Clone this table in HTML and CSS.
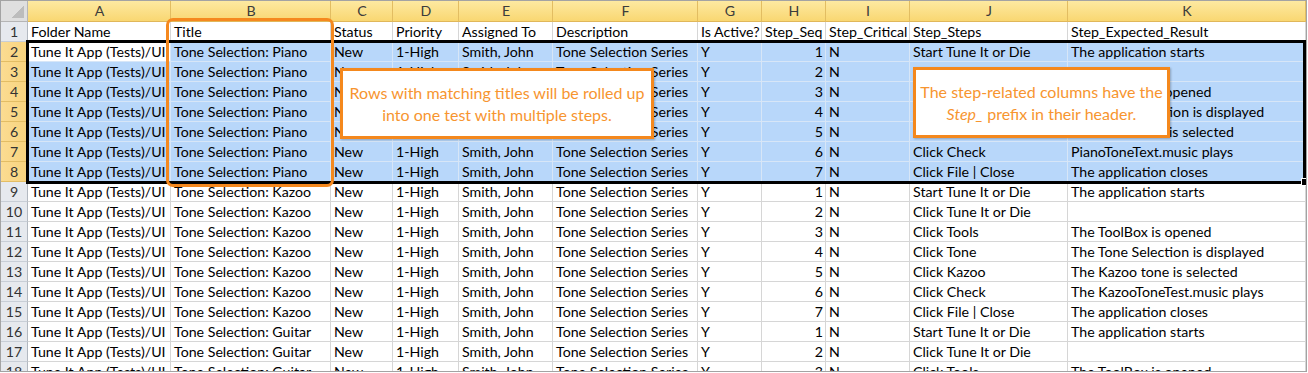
FILE: index.html
```html
<!DOCTYPE html>
<html>
<head>
<meta charset="utf-8">
<link rel="stylesheet" href="styles.css">
</head>
<body>
<div class="sheet">
  <table class="grid">
    <colgroup>
      <col class="w-rh"><col class="w-a"><col class="w-b"><col class="w-c"><col class="w-d"><col class="w-e"><col class="w-f"><col class="w-g"><col class="w-h"><col class="w-i"><col class="w-j"><col class="w-k">
    </colgroup>
    <thead>
      <tr class="colhdr">
        <th class="corner"><div class="corner-in"><span class="tri"></span></div></th>
        <th>A</th><th>B</th><th>C</th><th>D</th><th>E</th><th>F</th><th>G</th><th>H</th><th>I</th><th>J</th><th>K</th>
      </tr>
    </thead>
    <tbody>
      <tr><th class="rh">1</th><td>Folder Name</td><td>Title</td><td>Status</td><td>Priority</td><td>Assigned To</td><td>Description</td><td>Is Active?</td><td>Step_Seq</td><td>Step_Critical</td><td>Step_Steps</td><td>Step_Expected_Result</td></tr>
      <tr class="sel first"><th class="rh">2</th><td class="active">Tune It App (Tests)/UI</td><td>Tone Selection: Piano</td><td>New</td><td>1-High</td><td>Smith, John</td><td>Tone Selection Series</td><td>Y</td><td class="num">1</td><td>N</td><td>Start Tune It or Die</td><td>The application starts</td></tr>
      <tr class="sel"><th class="rh">3</th><td>Tune It App (Tests)/UI</td><td>Tone Selection: Piano</td><td>New</td><td>1-High</td><td>Smith, John</td><td>Tone Selection Series</td><td>Y</td><td class="num">2</td><td>N</td><td>Click Tune It or Die</td><td></td></tr>
      <tr class="sel"><th class="rh">4</th><td>Tune It App (Tests)/UI</td><td>Tone Selection: Piano</td><td>New</td><td>1-High</td><td>Smith, John</td><td>Tone Selection Series</td><td>Y</td><td class="num">3</td><td>N</td><td>Click Tools</td><td>The ToolBox is opened</td></tr>
      <tr class="sel"><th class="rh">5</th><td>Tune It App (Tests)/UI</td><td>Tone Selection: Piano</td><td>New</td><td>1-High</td><td>Smith, John</td><td>Tone Selection Series</td><td>Y</td><td class="num">4</td><td>N</td><td>Click Tone</td><td>The Tone Selection is displayed</td></tr>
      <tr class="sel"><th class="rh">6</th><td>Tune It App (Tests)/UI</td><td>Tone Selection: Piano</td><td>New</td><td>1-High</td><td>Smith, John</td><td>Tone Selection Series</td><td>Y</td><td class="num">5</td><td>N</td><td>Click Piano</td><td>The Piano tone is selected</td></tr>
      <tr class="sel"><th class="rh">7</th><td>Tune It App (Tests)/UI</td><td>Tone Selection: Piano</td><td>New</td><td>1-High</td><td>Smith, John</td><td>Tone Selection Series</td><td>Y</td><td class="num">6</td><td>N</td><td>Click Check</td><td>PianoToneText.music plays</td></tr>
      <tr class="sel"><th class="rh">8</th><td>Tune It App (Tests)/UI</td><td>Tone Selection: Piano</td><td>New</td><td>1-High</td><td>Smith, John</td><td>Tone Selection Series</td><td>Y</td><td class="num">7</td><td>N</td><td>Click File | Close</td><td>The application closes</td></tr>
      <tr><th class="rh">9</th><td>Tune It App (Tests)/UI</td><td>Tone Selection: Kazoo</td><td>New</td><td>1-High</td><td>Smith, John</td><td>Tone Selection Series</td><td>Y</td><td class="num">1</td><td>N</td><td>Start Tune It or Die</td><td>The application starts</td></tr>
      <tr><th class="rh">10</th><td>Tune It App (Tests)/UI</td><td>Tone Selection: Kazoo</td><td>New</td><td>1-High</td><td>Smith, John</td><td>Tone Selection Series</td><td>Y</td><td class="num">2</td><td>N</td><td>Click Tune It or Die</td><td></td></tr>
      <tr><th class="rh">11</th><td>Tune It App (Tests)/UI</td><td>Tone Selection: Kazoo</td><td>New</td><td>1-High</td><td>Smith, John</td><td>Tone Selection Series</td><td>Y</td><td class="num">3</td><td>N</td><td>Click Tools</td><td>The ToolBox is opened</td></tr>
      <tr><th class="rh">12</th><td>Tune It App (Tests)/UI</td><td>Tone Selection: Kazoo</td><td>New</td><td>1-High</td><td>Smith, John</td><td>Tone Selection Series</td><td>Y</td><td class="num">4</td><td>N</td><td>Click Tone</td><td>The Tone Selection is displayed</td></tr>
      <tr><th class="rh">13</th><td>Tune It App (Tests)/UI</td><td>Tone Selection: Kazoo</td><td>New</td><td>1-High</td><td>Smith, John</td><td>Tone Selection Series</td><td>Y</td><td class="num">5</td><td>N</td><td>Click Kazoo</td><td>The Kazoo tone is selected</td></tr>
      <tr><th class="rh">14</th><td>Tune It App (Tests)/UI</td><td>Tone Selection: Kazoo</td><td>New</td><td>1-High</td><td>Smith, John</td><td>Tone Selection Series</td><td>Y</td><td class="num">6</td><td>N</td><td>Click Check</td><td>The KazooToneTest.music plays</td></tr>
      <tr><th class="rh">15</th><td>Tune It App (Tests)/UI</td><td>Tone Selection: Kazoo</td><td>New</td><td>1-High</td><td>Smith, John</td><td>Tone Selection Series</td><td>Y</td><td class="num">7</td><td>N</td><td>Click File | Close</td><td>The application closes</td></tr>
      <tr><th class="rh">16</th><td>Tune It App (Tests)/UI</td><td>Tone Selection: Guitar</td><td>New</td><td>1-High</td><td>Smith, John</td><td>Tone Selection Series</td><td>Y</td><td class="num">1</td><td>N</td><td>Start Tune It or Die</td><td>The application starts</td></tr>
      <tr><th class="rh">17</th><td>Tune It App (Tests)/UI</td><td>Tone Selection: Guitar</td><td>New</td><td>1-High</td><td>Smith, John</td><td>Tone Selection Series</td><td>Y</td><td class="num">2</td><td>N</td><td>Click Tune It or Die</td><td></td></tr>
      <tr><th class="rh">18</th><td>Tune It App (Tests)/UI</td><td>Tone Selection: Guitar</td><td>New</td><td>1-High</td><td>Smith, John</td><td>Tone Selection Series</td><td>Y</td><td class="num">3</td><td>N</td><td>Click Tools</td><td>The ToolBox is opened</td></tr>
    </tbody>
  </table>

  <div class="selection-box"></div>
  <div class="fill-handle"></div>
  <div class="title-ring"></div>
  <div class="callout callout-rows"><p class="callout-text">Rows with matching titles will be rolled up<br>into one test with multiple steps.</p></div>
  <div class="callout callout-steps"><p class="callout-text">The step-related columns have the<br><em>Step_</em> prefix in their header.</p></div>
</div>
</body>
</html>
```

FILE: styles.css
```css
html, body {
  margin: 0;
  padding: 0;
  background: #ffffff;
}

.sheet {
  position: relative;
  width: 1305px;
  height: 370px;
  border: 1px solid #a3a3a3;
  overflow: hidden;
  font-family: "Lato", "Liberation Sans", sans-serif;
  font-size: 14.2px;
  color: #000;
}

.grid {
  border-collapse: separate;
  border-spacing: 0;
  table-layout: fixed;
  width: 1305px;
}

.w-rh { width: 27px; }
.w-a { width: 143px; }
.w-b { width: 160px; }
.w-c { width: 62px; }
.w-d { width: 66px; }
.w-e { width: 94px; }
.w-f { width: 145px; }
.w-g { width: 64px; }
.w-h { width: 64px; }
.w-i { width: 84px; }
.w-j { width: 158px; }
.w-k { width: 238px; }

.grid td,
.grid th {
  box-sizing: border-box;
  height: 20px;
  padding: 0 2px 0 3px;
  line-height: 19px;
  white-space: nowrap;
  overflow: hidden;
  text-overflow: clip;
  border-right: 1px solid #d6d6d6;
  border-bottom: 1px solid #d6d6d6;
  text-align: left;
  font-weight: normal;
  vertical-align: middle;
}

/* column header row */
.colhdr th {
  height: 21px;
  line-height: 20px;
  text-align: center;
  color: #3c3c3c;
  background: linear-gradient(#fde9a1, #f9d772);
  border-right: 1px solid #e2bd62;
  border-bottom: 1px solid #e0b75a;
}

.colhdr th.corner {
  padding: 0;
  background: #dfdfdf;
  border-right: 1px solid #b5b5b5;
  border-bottom: 1px solid #b5b5b5;
}

.corner-in {
  display: flex;
  justify-content: flex-end;
  align-items: flex-end;
  height: 20px;
  padding: 0 3px 3px 0;
  box-sizing: border-box;
}

.tri {
  width: 12px;
  height: 12px;
  background: linear-gradient(135deg, transparent 50%, #bcbcbc 50%);
}

/* row headers */
.grid th.rh {
  padding: 0;
  text-align: center;
  color: #333;
  background: #e6e9ee;
  border-right: 1px solid #b2b8c0;
  border-bottom: 1px solid #c8ced6;
}

.grid tr.sel th.rh {
  background: linear-gradient(90deg, #fbdc92, #f8d37d);
  border-bottom: 1px solid #e3bd64;
  border-right: 1px solid #d9ad4c;
}

/* selected rows */
.grid tr.sel td {
  background: #b8d7fa;
  border-right-color: #d7e6f7;
  border-bottom-color: #d7e6f7;
}

.grid tr.sel td.active {
  background: #ffffff;
}

.grid td.num {
  text-align: right;
}

/* overlays */
.selection-box {
  position: absolute;
  left: 25px;
  top: 39px;
  width: 1280px;
  height: 144px;
  box-sizing: border-box;
  border: 3px solid #000;
}

.fill-handle {
  position: absolute;
  left: 1300px;
  top: 177px;
  width: 6px;
  height: 6px;
  background: #000;
  border: 1px solid #fff;
}

.title-ring {
  position: absolute;
  left: 165px;
  top: 17px;
  width: 168px;
  height: 169px;
  box-sizing: border-box;
  border: 3px solid #f5891f;
  border-radius: 7px;
}

.callout {
  position: absolute;
  box-sizing: border-box;
  display: flex;
  align-items: center;
  justify-content: center;
  background: #ffffff;
  border: 3px solid #f4881d;
  box-shadow: 1px 1px 2px rgba(0, 0, 0, 0.25);
}

.callout-text {
  margin: 0;
  text-align: center;
  color: #f7952f;
  font-size: 16px;
  line-height: 22px;
}

.callout-text em {
  font-style: italic;
}

.callout-rows {
  left: 339px;
  top: 67px;
  width: 314px;
  height: 71px;
}

.callout-steps {
  left: 912px;
  top: 66px;
  width: 257px;
  height: 71px;
}
```
